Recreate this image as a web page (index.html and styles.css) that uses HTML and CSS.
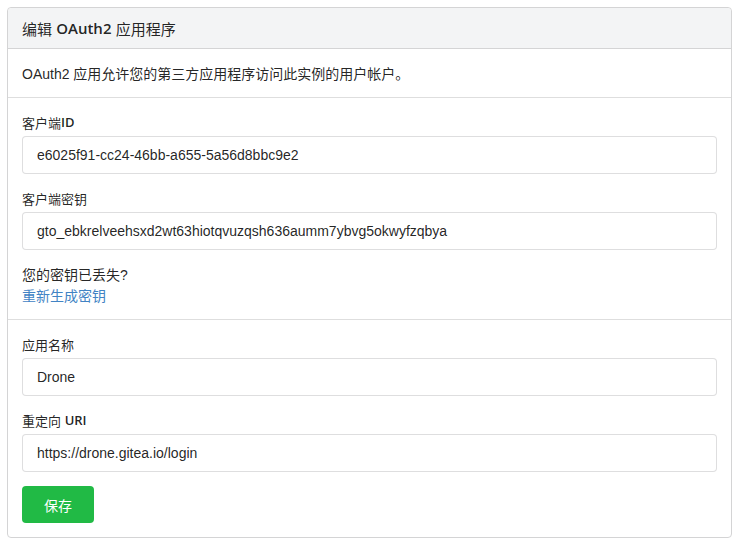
FILE: index.html
```html
<!DOCTYPE html>
<html lang="zh-CN">
<head>
<meta charset="utf-8">
<title>编辑 OAuth2 应用程序</title>
<link rel="stylesheet" href="styles.css">
</head>
<body>
<div class="panel">
  <h4 class="panel-header">编辑 <span class="latin">OAuth2</span> 应用程序</h4>
  <div class="panel-section">
    <p class="desc">OAuth2 应用允许您的第三方应用程序访问此实例的用户帐户。</p>
  </div>
  <div class="panel-section form">
    <div class="field">
      <label class="label">客户端<span class="latin">ID</span></label>
      <input class="input" type="text" value="e6025f91-cc24-46bb-a655-5a56d8bbc9e2" readonly>
    </div>
    <div class="field">
      <label class="label">客户端密钥</label>
      <input class="input" type="text" value="gto_ebkrelveehsxd2wt63hiotqvuzqsh636aumm7ybvg5okwyfzqbya" readonly>
    </div>
    <div class="lost">
      <div class="lost-line">您的密钥已丢失?</div>
      <a class="lost-line link" href="#">重新生成密钥</a>
    </div>
  </div>
  <div class="panel-section form">
    <div class="field">
      <label class="label">应用名称</label>
      <input class="input" type="text" value="Drone">
    </div>
    <div class="field">
      <label class="label">重定向 <span class="latin">URI</span></label>
      <input class="input" type="text" value="https://drone.gitea.io/login">
    </div>
    <button class="btn-save" type="button">保存</button>
  </div>
</div>
</body>
</html>
```
FILE: styles.css
```css
html, body {
  margin: 0;
  padding: 0;
  background: #fff;
}
body {
  padding: 7px 10px 0 7px;
  font-family: "Liberation Sans", "Noto Sans CJK SC", sans-serif;
  font-size: 14px;
  color: rgba(0, 0, 0, 0.87);
}
.panel {
  width: 723px;
  border: 1px solid #d4d4d5;
  border-radius: 4px;
}
.panel-header {
  margin: 0;
  height: 41px;
  box-sizing: border-box;
  padding: 0 14px;
  display: flex;
  align-items: center;
  background: #f3f4f5;
  border-bottom: 1px solid #d4d4d5;
  border-radius: 4px 4px 0 0;
  font-size: 15px;
  font-weight: 400;
  white-space: pre;
}
.latin {
  font-family: "Open Sans", "Liberation Sans", sans-serif;
  font-weight: 600;
}
.panel-section {
  padding: 0 14px;
  border-bottom: 1px solid #dedede;
}
.panel-section:last-child {
  border-bottom: none;
}
.desc {
  margin: 0;
  height: 48px;
  display: flex;
  align-items: center;
}
.form {
  padding-top: 14px;
  padding-bottom: 14px;
  display: flex;
  flex-direction: column;
  gap: 14px;
}
.field {
  display: flex;
  flex-direction: column;
  gap: 4px;
}
.label {
  display: flex;
  align-items: center;
  white-space: pre;
  height: 20px;
  font-size: 13px;
  font-weight: 400;
}
.input {
  height: 38px;
  box-sizing: border-box;
  border: 1px solid rgba(34, 36, 38, 0.15);
  border-radius: 4px;
  padding: 0 14px;
  font-family: inherit;
  font-size: 14px;
  color: rgba(0, 0, 0, 0.87);
  outline: none;
  background: #fff;
}
.lost {
  margin-top: -1px;
  display: flex;
  flex-direction: column;
  align-items: flex-start;
}
.lost-line {
  display: flex;
  align-items: center;
  height: 21px;
}
.link {
  color: #4183c4;
  text-decoration: none;
}
.btn-save {
  align-self: flex-start;
  width: 72px;
  height: 37px;
  border: none;
  border-radius: 4px;
  background: #21ba45;
  color: #fff;
  font-family: inherit;
  font-size: 14px;
  font-weight: 400;
}
```
